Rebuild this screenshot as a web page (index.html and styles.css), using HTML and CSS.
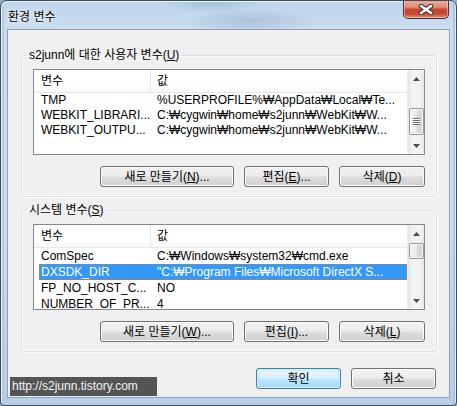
FILE: index.html
```html
<!DOCTYPE html>
<html lang="ko">
<head>
<meta charset="utf-8">
<title>환경 변수</title>
<link rel="stylesheet" href="styles.css">
</head>
<body>
<div class="window">
  <div class="titlebar">
    <span class="title">환경 변수</span>
    <div class="close">
      <svg width="16" height="11" viewBox="0 0 16 11"><path d="M3 2 L13 9 M13 2 L3 9" stroke="#3a3a3a" stroke-width="4.6" stroke-linecap="round"/><path d="M3 2 L13 9 M13 2 L3 9" stroke="#ffffff" stroke-width="2.6" stroke-linecap="round"/></svg>
    </div>
  </div>
  <div class="client">
    <fieldset class="group">
      <legend>s2junn에 대한 사용자 변수(<u>U</u>)</legend>
      <div class="group-body">
        <div class="list list-user">
          <div class="list-main">
            <div class="list-head"><span class="hcell col1">변수</span><span class="hcell col2">값</span></div>
            <div class="row"><span class="cell col1">TMP</span><span class="cell col2">%USERPROFILE%₩AppData₩Local₩Te...</span></div>
            <div class="row"><span class="cell col1">WEBKIT_LIBRARI...</span><span class="cell col2">C:₩cygwin₩home₩s2junn₩WebKit₩W...</span></div>
            <div class="row"><span class="cell col1">WEBKIT_OUTPU...</span><span class="cell col2">C:₩cygwin₩home₩s2junn₩WebKit₩W...</span></div>
          </div>
          <div class="scrollbar">
            <div class="sb-btn"><svg width="7" height="4" viewBox="0 0 7 4"><path d="M0 4 L3.5 0 L7 4Z" fill="#4a4a4a"/></svg></div>
            <div class="sb-track track-user"><div class="thumb thumb-user"><span class="grip"></span></div></div>
            <div class="sb-btn"><svg width="7" height="4" viewBox="0 0 7 4"><path d="M0 0 L3.5 4 L7 0Z" fill="#4a4a4a"/></svg></div>
          </div>
        </div>
        <div class="btn-row">
          <button class="btn w-new">새로 만들기(<u>N</u>)...</button>
          <button class="btn w-edit">편집(<u>E</u>)...</button>
          <button class="btn w-del">삭제(<u>D</u>)</button>
        </div>
      </div>
    </fieldset>
    <fieldset class="group group-sys">
      <legend>시스템 변수(<u>S</u>)</legend>
      <div class="group-body">
        <div class="list">
          <div class="list-main">
            <div class="list-head"><span class="hcell col1">변수</span><span class="hcell col2">값</span></div>
            <div class="row"><span class="cell col1">ComSpec</span><span class="cell col2">C:₩Windows₩system32₩cmd.exe</span></div>
            <div class="row selected"><span class="cell col1">DXSDK_DIR</span><span class="cell col2">"C:₩Program Files₩Microsoft DirectX S...</span></div>
            <div class="row"><span class="cell col1">FP_NO_HOST_C...</span><span class="cell col2">NO</span></div>
            <div class="row"><span class="cell col1">NUMBER_OF_PR...</span><span class="cell col2">4</span></div>
          </div>
          <div class="scrollbar">
            <div class="sb-btn"><svg width="7" height="4" viewBox="0 0 7 4"><path d="M0 4 L3.5 0 L7 4Z" fill="#4a4a4a"/></svg></div>
            <div class="sb-track track-sys"><div class="thumb thumb-sys"></div></div>
            <div class="sb-btn"><svg width="7" height="4" viewBox="0 0 7 4"><path d="M0 0 L3.5 4 L7 0Z" fill="#4a4a4a"/></svg></div>
          </div>
        </div>
        <div class="btn-row">
          <button class="btn w-new">새로 만들기(<u>W</u>)...</button>
          <button class="btn w-edit">편집(<u>I</u>)...</button>
          <button class="btn w-del">삭제(<u>L</u>)</button>
        </div>
      </div>
    </fieldset>
    <div class="dialog-buttons">
      <button class="btn btn-default w-ok">확인</button>
      <button class="btn w-ok">취소</button>
    </div>
  </div>
  <div class="watermark">http://s2junn.tistory.com</div>
</div>
</body>
</html>
```
FILE: styles.css
```css
* { box-sizing: border-box; }
html, body { margin: 0; padding: 0; }
body {
  width: 457px;
  height: 406px;
  overflow: hidden;
  font-family: "Liberation Sans", "Noto Sans CJK KR", sans-serif;
  font-size: 12px;
  color: #000;
  background: #8fb0d2;
}
.window {
  position: relative;
  width: 457px;
  height: 406px;
  border: 1px solid #3d4b5c;
  border-radius: 7px 7px 4px 4px;
  background:
    radial-gradient(ellipse 70px 12px at 250px 20px, rgba(80,110,140,0.22), rgba(80,110,140,0) 100%),
    radial-gradient(ellipse 50px 10px at 210px 2px, rgba(70,140,150,0.25), rgba(70,140,150,0) 100%),
    linear-gradient(to bottom, #bfd5ec 0, #cadcf0 28px, #c9dbef 60%, #b9cfe7 100%);
  box-shadow: inset 1px 1px 0 #e9f1fa, inset -1px 0 0 #e0ebf6, inset 3px 0 0 #b2cce8, inset -3px 0 0 #a9c5e6;
  display: flex;
  flex-direction: column;
  overflow: hidden;
}
.titlebar {
  height: 28px;
  display: flex;
  align-items: flex-start;
  flex: none;
}
.title {
  padding: 8px 0 0 7px;
  line-height: 14px;
  font-family: "Noto Sans CJK KR", sans-serif;
  font-size: 12px;
  color: #000;
  text-shadow: 0 0 6px #fff, 0 0 3px #fff;
}
.close {
  margin-left: auto;
  margin-right: 7px;
  margin-top: -1px;
  width: 46px;
  height: 19px;
  border: 1px solid #5b2a22;
  border-top: none;
  border-radius: 0 0 5px 5px;
  background: linear-gradient(to bottom, #eab0a2 0, #dd8b78 40%, #c8462f 52%, #c44a33 75%, #e0886e 100%);
  box-shadow: inset 0 0 0 1px rgba(255,220,210,0.55);
  display: flex;
  align-items: center;
  justify-content: center;
}
.client {
  margin: 0 6px;
  height: 369px;
  border: 1px solid #8da2ba;
  background: #f0f0f0;
  display: flex;
  flex-direction: column;
  padding: 18px 12px 0 13px;
  flex: none;
}
.group {
  margin: 0;
  padding: 0;
  width: 416px;
  min-width: 0;
  border: 1px solid #d5dfe5;
  border-radius: 3px;
  box-shadow: inset 0 0 0 1px #fbfbfb, 1px 1px 0 #fdfdfd;
}
.group-sys { margin-top: 6px; }
.group legend {
  margin-left: 5px;
  padding: 0 2px;
  line-height: 14px;
  font-size: 12px;
}
.group-body {
  padding: 7px 11px 9px;
  display: flex;
  flex-direction: column;
  gap: 11px;
}
.list {
  height: 86px;
  border: 1px solid #828790;
  background: #fff;
  display: flex;
}
.list-main {
  flex: 1;
  min-width: 0;
  overflow: hidden;
}
.list-head {
  height: 23px;
  display: flex;
  border-bottom: 1px solid #e5e7ea;
  background: linear-gradient(to bottom, #ffffff 0, #ffffff 55%, #f8f9fa 100%);
}
.hcell {
  line-height: 22px;
  white-space: nowrap;
}
.hcell.col1 {
  width: 117px;
  padding-left: 7px;
  border-right: 1px solid #e3e6ea;
}
.hcell.col2 { padding-left: 6px; }
.row {
  display: flex;
  height: 16px;
  line-height: 16px;
  margin-left: 5px;
  padding-left: 2px;
}
.list-user .row {
  height: 15px;
  line-height: 15px;
}
.cell {
  white-space: nowrap;
  overflow: hidden;
}
.cell.col1 { width: 116px; flex: none; }
.cell.col2 { flex: 1; min-width: 0; }
.row.selected {
  background: #3399ff;
  color: #fff;
  outline: 1px dotted #d07a1c;
  outline-offset: -1px;
}
.scrollbar {
  width: 17px;
  flex: none;
  display: flex;
  flex-direction: column;
  background: linear-gradient(to right, #e3e3e3 0, #eeeeee 15%, #f4f4f4 45%, #f1f1f1 80%, #e6e6e6 100%);
  border-left: 1px solid #ececec;
}
.sb-btn {
  height: 17px;
  flex: none;
  display: flex;
  align-items: center;
  justify-content: center;
}
.sb-track {
  flex: 1;
  display: flex;
  flex-direction: column;
  align-items: center;
}
.track-user { padding-top: 21px; }
.track-sys { padding-top: 1px; }
.thumb {
  width: 15px;
  border: 1px solid #979797;
  border-radius: 2px;
  background: linear-gradient(to right, #f4f4f4 0, #ebebeb 45%, #dcdcdc 55%, #d2d2d2 100%);
  box-shadow: inset 0 0 0 1px #fafafa;
  display: flex;
  align-items: center;
  justify-content: center;
}
.thumb-user { height: 27px; }
.thumb-sys { height: 16px; }
.grip {
  width: 7px;
  height: 7px;
  background: repeating-linear-gradient(to bottom, #6f6f6f 0, #6f6f6f 1px, #fdfdfd 1px, #fdfdfd 2px);
}
.btn-row {
  display: flex;
  justify-content: flex-end;
  gap: 10px;
}
.btn {
  height: 21px;
  padding: 0;
  margin: 0;
  border: 1px solid #707070;
  border-radius: 3px;
  background: linear-gradient(to bottom, #f2f2f2 0, #ebebeb 48%, #dddddd 52%, #cfcfcf 100%);
  box-shadow: inset 0 0 0 1px #fbfbfb;
  font-family: "Liberation Sans", "Noto Sans CJK KR", sans-serif;
  font-size: 12px;
  line-height: 18px;
  color: #000;
  text-align: center;
}
.w-new { width: 134px; }
.w-edit { width: 85px; }
.w-del { width: 86px; }
.w-ok { width: 85px; }
.btn-default {
  border-color: #3c7fb1;
  background: linear-gradient(to bottom, #eaf6fd 0, #d9f0fc 48%, #bee6fd 52%, #a7d9f5 100%);
  box-shadow: inset 0 0 0 1px #d6f0fd, inset 0 0 2px 1px #9fd9f6;
}
.dialog-buttons {
  margin-top: 16px;
  display: flex;
  justify-content: flex-end;
  gap: 10px;
  padding-right: 1px;
}
.watermark {
  position: absolute;
  left: 9px;
  top: 376px;
  width: 147px;
  height: 19px;
  padding-left: 2px;
  line-height: 19px;
  background: #545454;
  color: #f4f4f4;
  font-family: "Liberation Sans", sans-serif;
  font-size: 12px;
  white-space: nowrap;
}
```
